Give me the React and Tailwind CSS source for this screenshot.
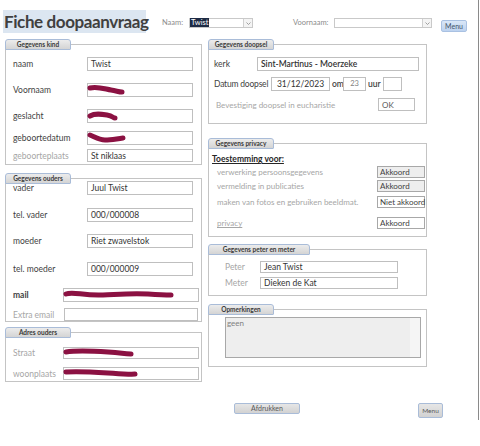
import React from "react";

// redaction scribble drawn over a field
const Scribble = ({ d, w, h, className = "" }) => (
  <svg
    width={w}
    height={h}
    viewBox={`0 0 ${w} ${h}`}
    className={`pointer-events-none absolute ${className}`}
  >
    <path d={d} fill="none" stroke="#8b1142" strokeWidth="5" strokeLinecap="round" strokeLinejoin="round" />
  </svg>
);

const Tab = ({ children, w = "w-[66px]" }) => (
  <div
    className={`absolute -top-[6px] -left-px h-[11px] ${w} rounded-t-[3px] rounded-b-[1px] border border-[#a9bcd8] bg-linear-to-b from-[#ececec] to-[#d4d4d4] text-center text-[6.5px] font-bold leading-[9px] text-[#3b3b3b]`}
  >
    {children}
  </div>
);

const Group = ({ title, tabW, className = "", children }) => (
  <div className={`relative border border-[#c4c4c4] ${className}`}>
    <Tab w={tabW}>{title}</Tab>
    {children}
  </div>
);

const Field = ({ className = "", children }) => (
  <div
    className={`relative h-[14px] shrink-0 border border-[#bfbfbf] bg-white px-[3px] text-[8.5px] leading-[12px] text-[#333333] ${className}`}
  >
    {children}
  </div>
);

const Combo = ({ className = "", children }) => (
  <div className={`flex h-[10px] border border-[#c9c9c9] bg-white ${className}`}>
    <div className="flex-1 text-[7.5px] leading-[8px]">{children}</div>
    <div className="flex w-[9px] items-center justify-center border-l border-[#d0d0d0] bg-[#f4f4f4]">
      <svg width="5" height="3" viewBox="0 0 5 3">
        <path d="M0.5 0.5 L2.5 2.5 L4.5 0.5" fill="none" stroke="#8a8a8a" strokeWidth="0.8" />
      </svg>
    </div>
  </div>
);

const Row = ({ label, gray, bold, labelW = "w-[74px]", className = "", fieldClass = "w-[106px]", children }) => (
  <div className={`flex items-center ${className}`}>
    <div
      className={`${labelW} shrink-0 text-[8.5px] leading-[12px] ${
        gray ? "text-[#a6a6a6]" : "text-[#3f3f3f]"
      } ${bold ? "font-bold" : ""}`}
    >
      {label}
    </div>
    <Field className={fieldClass}>{children}</Field>
  </div>
);

const Choice = ({ label, value, filled, underline, className = "" }) => (
  <div className={`flex items-center ${className}`}>
    <div className={`w-[165px] shrink-0 pl-[5px] text-[8px] leading-[12px] text-[#a6a6a6] ${underline ? "underline" : ""}`}>
      {label}
    </div>
    <div
      className={`h-[12px] w-[48px] border border-[#a8a8a8] px-[2px] text-[8px] leading-[10px] text-[#3f3f3f] ${
        filled ? "bg-[#eeeeee]" : "bg-white"
      }`}
    >
      {value}
    </div>
  </div>
);

export default function App() {
  return (
    <div className="h-[446px] w-[480px] whitespace-nowrap bg-white font-[Lato,'Liberation_Sans',sans-serif]">
      <div className="h-[420px] w-[479px] border-r border-[#8a8a8a] pt-[10px]">
        {/* header */}
        <div className="flex items-start">
          <div className="ml-[3px] flex h-[23px] w-[143px] items-center bg-[#dce6f1] pl-[1px] text-[17px] font-bold leading-none tracking-[-0.4px] text-[#404040]">
            Fiche doopaanvraag
          </div>
          <div className="ml-[16px] mt-[8px] flex items-center">
            <span className="w-[27px] text-[7.5px] leading-[10px] text-[#8c8c8c]">Naam:</span>
            <Combo className="w-[64px]">
              <span className="bg-[#1e2b45] px-[1px] text-white">Twist</span>
            </Combo>
          </div>
          <div className="ml-[40px] mt-[8px] flex items-center">
            <span className="w-[41px] text-[7.5px] leading-[10px] text-[#8c8c8c]">Voornaam:</span>
            <Combo className="w-[98px]" />
          </div>
          <div className="ml-[9px] mt-[10px] flex h-[12px] w-[26px] items-center justify-center rounded-[2px] border border-[#a9c1e2] bg-linear-to-b from-[#dae7f7] to-[#bcd2ef] text-[7px] text-[#44546a]">
            Menu
          </div>
        </div>

        {/* body */}
        <div className="mt-[11px] flex items-start pl-[5px]">
          {/* left column */}
          <div className="w-[197px]">
            <Group title="Gegevens kind" className="h-[121px] pl-[7px] pt-[12px]">
              <Row label="naam">Twist</Row>
              <Row label="Voornaam" className="mt-[12px]">
                <Scribble w={38} h={12} className="-left-px top-0" d="M3 4 C10 2, 18 5, 24 6 S 32 8, 35 8" />
              </Row>
              <Row label="geslacht" className="mt-[12px]">
                <Scribble w={32} h={12} className="-left-px top-0" d="M3 6 C8 3, 14 4, 20 5 S 26 8, 28 8" />
              </Row>
              <Row label="geboortedatum" className="mt-[8px]">
                <Scribble w={40} h={12} className="-left-px top-0" d="M3 3 C8 5, 12 8, 18 8 S 28 7, 36 6" />
              </Row>
              <Row label="geboorteplaats" gray className="mt-[4px]" fieldClass="w-[106px] !h-[13px]">
                St niklaas
              </Row>
            </Group>

            <Group title="Gegevens ouders" className="mt-[13px] h-[144px] pl-[7px] pt-[2px]">
              <Row label="vader">Juul Twist</Row>
              <Row label="tel. vader" className="mt-[13px]">000/000008</Row>
              <Row label="moeder" className="mt-[12px]">Riet zwavelstok</Row>
              <Row label="tel. moeder" className="mt-[14px]">000/000009</Row>
              <Row label="mail" bold labelW="w-[50px]" fieldClass="w-[136px]" className="mt-[12px]">
                <Scribble w={112} h={12} className="-left-px top-0" d="M3 5 C10 2, 20 7, 40 6 S 70 4, 85 5 S 100 6, 108 6" />
              </Row>
              <Row label="Extra email" gray labelW="w-[51px]" fieldClass="w-[134px] !h-[13px]" className="mt-[6px]" />
            </Group>

            <Group title="Adres ouders" className="mt-[10px] h-[50px] pl-[7px] pt-[14px]">
              <Row label="Straat" gray labelW="w-[50px]" fieldClass="w-[136px] !h-[12px]">
                <Scribble w={72} h={10} className="-left-px top-0" d="M3 4 C15 2, 30 3, 45 4 S 60 6, 68 6" />
              </Row>
              <Row label="woonplaats" gray labelW="w-[50px]" fieldClass="w-[136px] !h-[13px]" className="mt-[8px]">
                <Scribble w={76} h={11} className="-left-px top-0" d="M3 4 C15 3, 30 4, 45 5 S 62 7, 72 6" />
              </Row>
            </Group>
          </div>

          {/* right column */}
          <div className="ml-[6px] w-[219px]">
            <Group title="Gegevens doopsel" className="h-[80px] pl-[5px] pt-[12px]">
              <Row label="kerk" labelW="w-[43px]" fieldClass="w-[162px] font-semibold">
                Sint-Martinus - Moerzeke
              </Row>
              <div className="mt-[6px] flex items-center text-[8.5px] leading-[12px] text-[#3f3f3f]">
                <span className="w-[57px] shrink-0 tracking-[-0.2px]">Datum doopsel</span>
                <Field className="w-[59px] text-center">31/12/2023</Field>
                <span className="ml-[2px] w-[11px] font-semibold">om</span>
                <Field className="w-[23px] text-center !text-[7.5px] !text-[#7f7f7f]">23</Field>
                <span className="ml-[2px] w-[15px] font-semibold">uur</span>
                <Field className="w-[19px]" />
              </div>
              <div className="mt-[7px] flex items-center">
                <span className="w-[164px] shrink-0 pl-[2px] text-[8px] leading-[12px] text-[#a6a6a6]">
                  Bevestiging doopsel in eucharistie
                </span>
                <Field className="w-[37px] !h-[13px] !text-[8px] !text-[#595959]">OK</Field>
              </div>
            </Group>

            <Group title="Gegevens privacy" className="mt-[19px] h-[94px] pl-[3px] pt-[9px]">
              <div className="text-[8.5px] font-bold leading-[12px] text-[#262626] underline">Toestemming voor:</div>
              <Choice label="verwerking persoonsgegevens" value="Akkoord" filled className="mt-[1px]" />
              <Choice label="vermelding in publicaties" value="Akkoord" filled className="mt-[2px]" />
              <Choice label="maken van fotos en gebruiken beeldmat." value="Niet akkoord" className="mt-[4px]" />
              <Choice label="privacy" value="Akkoord" underline className="mt-[9px]" />
            </Group>

            <Group title="Gegevens peter en meter" tabW="w-[102px]" className="mt-[12px] h-[47px] pl-[16px] pt-[11px]">
              <Row label="Peter" gray labelW="w-[35px]" fieldClass="w-[138px] !h-[12px] !leading-[10px]">Jean Twist</Row>
              <Row label="Meter" gray labelW="w-[35px]" fieldClass="w-[138px] !h-[12px] !leading-[10px]" className="mt-[4px]">
                Dieken de Kat
              </Row>
            </Group>

            <Group title="Opmerkingen" className="mt-[13px] h-[58px] pl-[16px] pt-[7px]">
              <div className="flex h-[41px] w-[196px] border border-[#a8a8a8] bg-[#eeeeee]">
                <div className="flex-1 pl-[1px] text-[8px] leading-[11px] text-[#7f7f7f]">geen</div>
                <div className="w-[10px] bg-[#f5f5f5]" />
              </div>
            </Group>
          </div>
        </div>

        {/* bottom buttons */}
        <div className="mt-[21px] flex items-start">
          <div className="ml-[234px] flex h-[11px] w-[66px] items-center justify-center rounded-[2px] border border-[#a9bcd8] bg-linear-to-b from-[#e6e6e6] to-[#d2d2d2] text-[7px] text-[#595959]">
            Afdrukken
          </div>
          <div className="ml-[118px] flex h-[15px] w-[25px] items-center justify-center rounded-[2px] border border-[#a9bcd8] bg-linear-to-b from-[#e6e6e6] to-[#d2d2d2] text-[6.5px] text-[#595959]">
            Menu
          </div>
        </div>
      </div>
    </div>
  );
}
